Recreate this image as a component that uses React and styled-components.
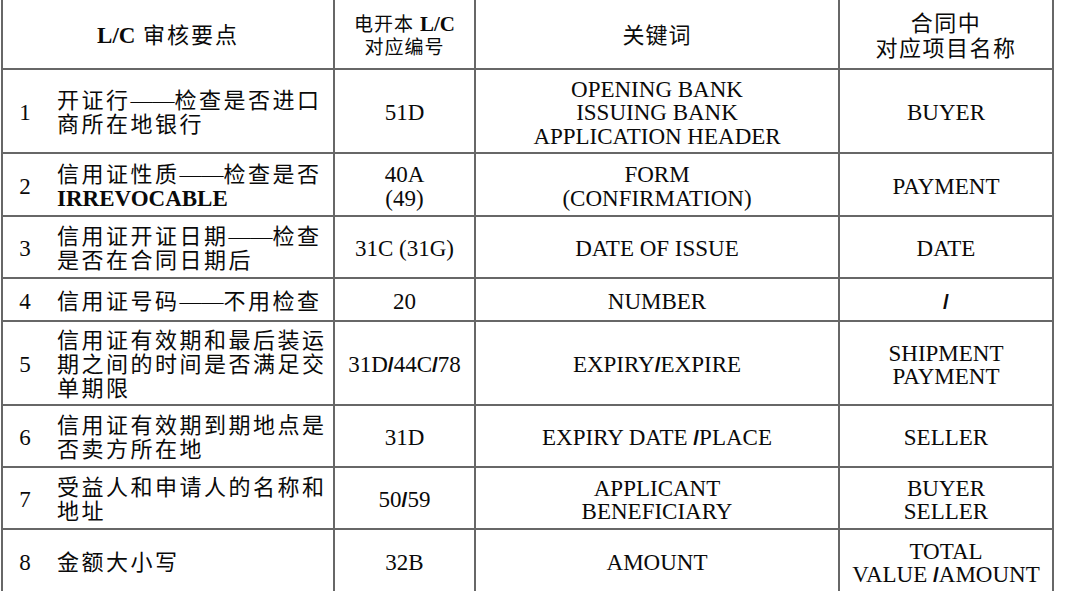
import React from 'react';
import styled, { createGlobalStyle } from 'styled-components';

const LINE = '#676767';

const GlobalStyle = createGlobalStyle`
  html, body {
    margin: 0;
    padding: 0;
    background: #fff;
    overflow: hidden;
  }
  body {
    font-family: "Liberation Serif", "Noto Sans CJK SC", serif;
    color: #0a0a0a;
  }
`;

// 整张表
const Table = styled.div`
  display: grid;
  grid-template-columns: 44px 288px 141px 364px 214px;
  grid-template-rows: 70px 84px 63px 62px 43px 84px 62px 62px 64px;
  width: max-content;
  margin-left: 1px;
  border-left: 2px solid ${LINE};
`;

const Cell = styled.div`
  box-sizing: border-box;
  display: flex;
  flex-direction: column;
  justify-content: center;
  align-items: ${(p) => (p.$left ? 'flex-start' : 'center')};
  text-align: ${(p) => (p.$left ? 'left' : 'center')};
  padding-top: 4px;
  padding-left: ${(p) => p.$pad || 0}px;
  grid-column: ${(p) => (p.$span ? `span ${p.$span}` : 'auto')};
  border-bottom: 2px solid ${LINE};
  border-right: ${(p) => (p.$open ? 'none' : `2px solid ${LINE}`)};
  font-size: 23px;
  line-height: 23.5px;
  white-space: nowrap;
`;

const HeadCell = styled(Cell)`
  font-size: ${(p) => p.$size || 22}px;
  line-height: ${(p) => p.$lh || 24}px;
  letter-spacing: ${(p) => p.$ls ?? 1.5}px;
`;

// 中文说明
const Point = styled.div`
  font-size: 22px;
  line-height: 24px;
  letter-spacing: 2.5px;
`;

const Dash = styled.span`
  letter-spacing: 0;
  font-family: "Liberation Serif", serif;
`;

const Strong = styled.b`
  font-family: "Liberation Serif", serif;
  font-weight: 700;
  letter-spacing: 0;
  font-size: ${(p) => p.$size || 23}px;
`;

const Slash = styled.b`
  font-family: "Liberation Sans", sans-serif;
  font-weight: 700;
  font-size: 21px;
  letter-spacing: 0;
`;

const Line = styled.div``;

const D = () => <Dash>——</Dash>;
const S = () => <Slash>/</Slash>;

const rows = [
  {
    no: '1',
    point: [<>开证行<D />检查是否进口</>, '商所在地银行'],
    code: ['51D'],
    key: ['OPENING BANK', 'ISSUING BANK', 'APPLICATION HEADER'],
    item: ['BUYER'],
  },
  {
    no: '2',
    point: [<>信用证性质<D />检查是否</>, <Strong>IRREVOCABLE</Strong>],
    code: ['40A', '(49)'],
    key: ['FORM', '(CONFIRMATION)'],
    item: ['PAYMENT'],
  },
  {
    no: '3',
    point: [<>信用证开证日期<D />检查</>, '是否在合同日期后'],
    code: ['31C (31G)'],
    key: ['DATE OF ISSUE'],
    item: ['DATE'],
  },
  {
    no: '4',
    point: [<>信用证号码<D />不用检查</>],
    code: ['20'],
    key: ['NUMBER'],
    item: [<S />],
  },
  {
    no: '5',
    point: ['信用证有效期和最后装运', '期之间的时间是否满足交', '单期限'],
    code: [<>31D<S />44C<S />78</>],
    key: [<>EXPIRY<S />EXPIRE</>],
    item: ['SHIPMENT', 'PAYMENT'],
  },
  {
    no: '6',
    point: ['信用证有效期到期地点是', '否卖方所在地'],
    code: ['31D'],
    key: [<>EXPIRY DATE <S />PLACE</>],
    item: ['SELLER'],
  },
  {
    no: '7',
    point: ['受益人和申请人的名称和', '地址'],
    code: [<>50<S />59</>],
    key: ['APPLICANT', 'BENEFICIARY'],
    item: ['BUYER', 'SELLER'],
  },
  {
    no: '8',
    point: ['金额大小写'],
    code: ['32B'],
    key: ['AMOUNT'],
    item: ['TOTAL', <>VALUE <S />AMOUNT</>],
  },
];

function Lines({ list }) {
  return list.map((l, i) => <Line key={i}>{l}</Line>);
}

function App() {
  return (
    <>
      <GlobalStyle />
      <Table>
        <HeadCell $span={2} $size={22} $ls={2}>
          <Line>
            <Strong>L/C</Strong> 审核要点
          </Line>
        </HeadCell>
        <HeadCell $size={19} $lh={23} $ls={1}>
          <Line>
            电开本 <Strong $size={21}>L/C</Strong>
          </Line>
          <Line>对应编号</Line>
        </HeadCell>
        <HeadCell $size={22} $ls={1}>
          <Line>关键词</Line>
        </HeadCell>
        <HeadCell $size={22} $lh={25} $ls={1.5}>
          <Line>合同中</Line>
          <Line>对应项目名称</Line>
        </HeadCell>

        {rows.map((r) => (
          <React.Fragment key={r.no}>
            <Cell $open>{r.no}</Cell>
            <Cell $left $pad={10}>
              <Point>
                <Lines list={r.point} />
              </Point>
            </Cell>
            <Cell>
              <Lines list={r.code} />
            </Cell>
            <Cell>
              <Lines list={r.key} />
            </Cell>
            <Cell>
              <Lines list={r.item} />
            </Cell>
          </React.Fragment>
        ))}
      </Table>
    </>
  );
}

export default App;
